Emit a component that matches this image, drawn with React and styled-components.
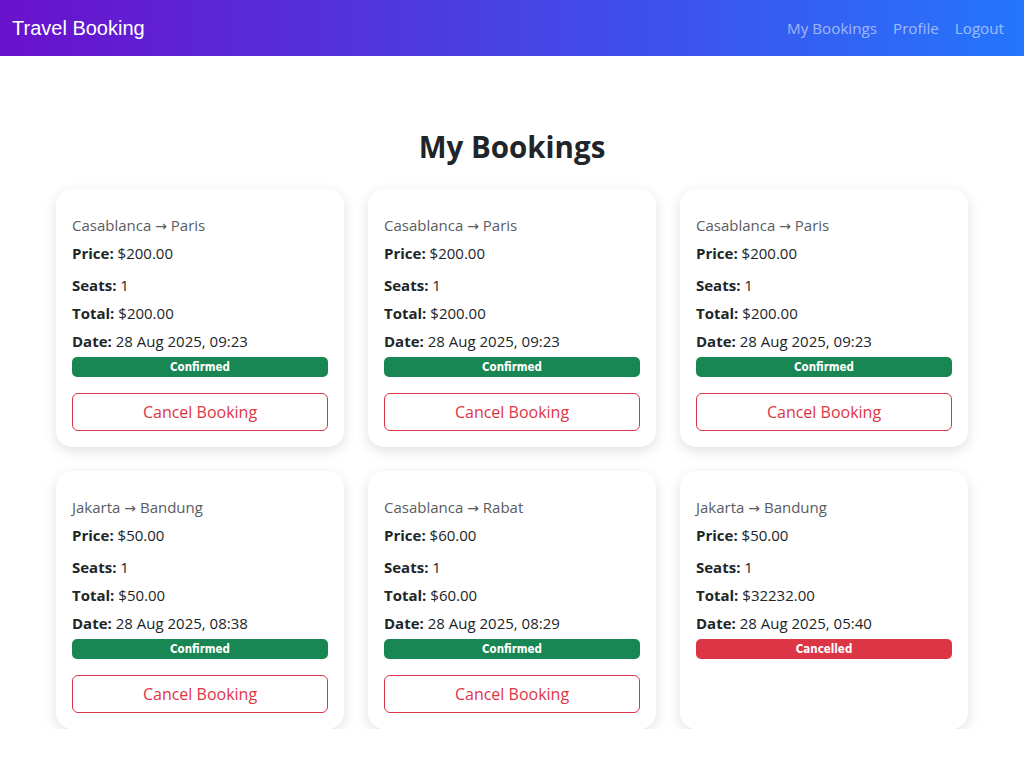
import { createGlobalStyle, styled } from "styled-components";

const bookings = [
  { id: 1, from: "Casablanca", to: "Paris", price: "$200.00", seats: 1, total: "$200.00", date: "28 Aug 2025, 09:23", status: "Confirmed" },
  { id: 2, from: "Casablanca", to: "Paris", price: "$200.00", seats: 1, total: "$200.00", date: "28 Aug 2025, 09:23", status: "Confirmed" },
  { id: 3, from: "Casablanca", to: "Paris", price: "$200.00", seats: 1, total: "$200.00", date: "28 Aug 2025, 09:23", status: "Confirmed" },
  { id: 4, from: "Jakarta", to: "Bandung", price: "$50.00", seats: 1, total: "$50.00", date: "28 Aug 2025, 08:38", status: "Confirmed" },
  { id: 5, from: "Casablanca", to: "Rabat", price: "$60.00", seats: 1, total: "$60.00", date: "28 Aug 2025, 08:29", status: "Confirmed" },
  { id: 6, from: "Jakarta", to: "Bandung", price: "$50.00", seats: 1, total: "$32232.00", date: "28 Aug 2025, 05:40", status: "Cancelled" },
];

function App() {
  return (
    <>
      <GlobalStyle />
      <StNavbar>
        <StBrand>Travel Booking</StBrand>
        <StNavLinks>
          <StNavLink>My Bookings</StNavLink>
          <StNavLink>Profile</StNavLink>
          <StNavLink>Logout</StNavLink>
        </StNavLinks>
      </StNavbar>

      <StContainer>
        <StTitle>My Bookings</StTitle>
        <StGrid>
          {bookings.map((b) => (
            <StCard key={b.id}>
              <StRoute>
                {b.from} <StArrow>→</StArrow> {b.to}
              </StRoute>
              <StLine>
                <b>Price:</b> {b.price}
              </StLine>
              <StLine $gap={4}>
                <b>Seats:</b> {b.seats}
              </StLine>
              <StLine>
                <b>Total:</b> {b.total}
              </StLine>
              <StLine>
                <b>Date:</b> {b.date}
              </StLine>
              <StBadge $cancelled={b.status === "Cancelled"}>{b.status}</StBadge>
              {b.status !== "Cancelled" && <StCancelButton>Cancel Booking</StCancelButton>}
            </StCard>
          ))}
        </StGrid>
      </StContainer>
    </>
  );
}

export default App;

// styled-components
const GlobalStyle = createGlobalStyle`
  * {
    box-sizing: border-box;
  }
  body {
    margin: 0;
    background: #fff;
    color: #212529;
    font-family: "Open Sans", "Liberation Sans", sans-serif;
    font-size: 16px;
    line-height: 1.5;
  }
`;

const StNavbar = styled.nav`
  display: flex;
  align-items: center;
  justify-content: space-between;
  height: 56px;
  padding: 0 12px;
  background: linear-gradient(90deg, #6a11cb 0%, #2575fc 100%);
`;

const StBrand = styled.div`
  font-family: "Liberation Sans", Arial, sans-serif;
  font-size: 20px;
  color: #fff;
`;

const StNavLinks = styled.div`
  display: flex;
  padding-top: 1px;
`;

const StNavLink = styled.a`
  padding: 8px;
  font-size: 15.2px;
  color: rgba(255, 255, 255, 0.55);
  cursor: pointer;
`;

const StContainer = styled.main`
  max-width: 960px;
  margin: 0 auto;
  padding: 0 24px;
`;

const StTitle = styled.h2`
  margin: 0;
  padding: 73px 0 24px;
  text-align: center;
  font-size: 29.5px;
  font-weight: 700;
  line-height: 36px;
`;

const StGrid = styled.div`
  display: grid;
  grid-template-columns: repeat(3, 288px);
  column-gap: 24px;
  row-gap: 24px;
  justify-content: center;
`;

const StCard = styled.div`
  display: flex;
  flex-direction: column;
  padding: 24px 16px 16px;
  background: #fff;
  border-radius: 16px;
  box-shadow: 0 4px 14px rgba(0, 0, 0, 0.12);
`;

const StRoute = styled.div`
  height: 24px;
  margin-bottom: 4px;
  font-size: 15px;
  line-height: 24px;
  color: #595c5f;
`;

const StArrow = styled.span`
  font-family: "DejaVu Sans", sans-serif;
  font-size: 14px;
  line-height: 1;
`;

const StLine = styled.p`
  margin: ${(props) => props.$gap || 0}px 0 4px;
  font-size: 15px;
  line-height: 24px;

  b {
    font-weight: 700;
  }
`;

const StBadge = styled.div`
  height: 20px;
  border-radius: 5px;
  background: ${(props) => (props.$cancelled ? "#dc3545" : "#198754")};
  color: #fff;
  font-family: "DejaVu Sans Condensed", "DejaVu Sans", sans-serif;
  font-size: 11.5px;
  font-weight: 700;
  line-height: 20px;
  text-align: center;
`;

const StCancelButton = styled.button`
  margin-top: 16px;
  height: 38px;
  border: 1px solid #dc3545;
  border-radius: 6px;
  background: transparent;
  color: #dc3545;
  font-family: "Open Sans", "Liberation Sans", sans-serif;
  font-size: 16px;
  font-weight: 500;
  cursor: pointer;
`;
